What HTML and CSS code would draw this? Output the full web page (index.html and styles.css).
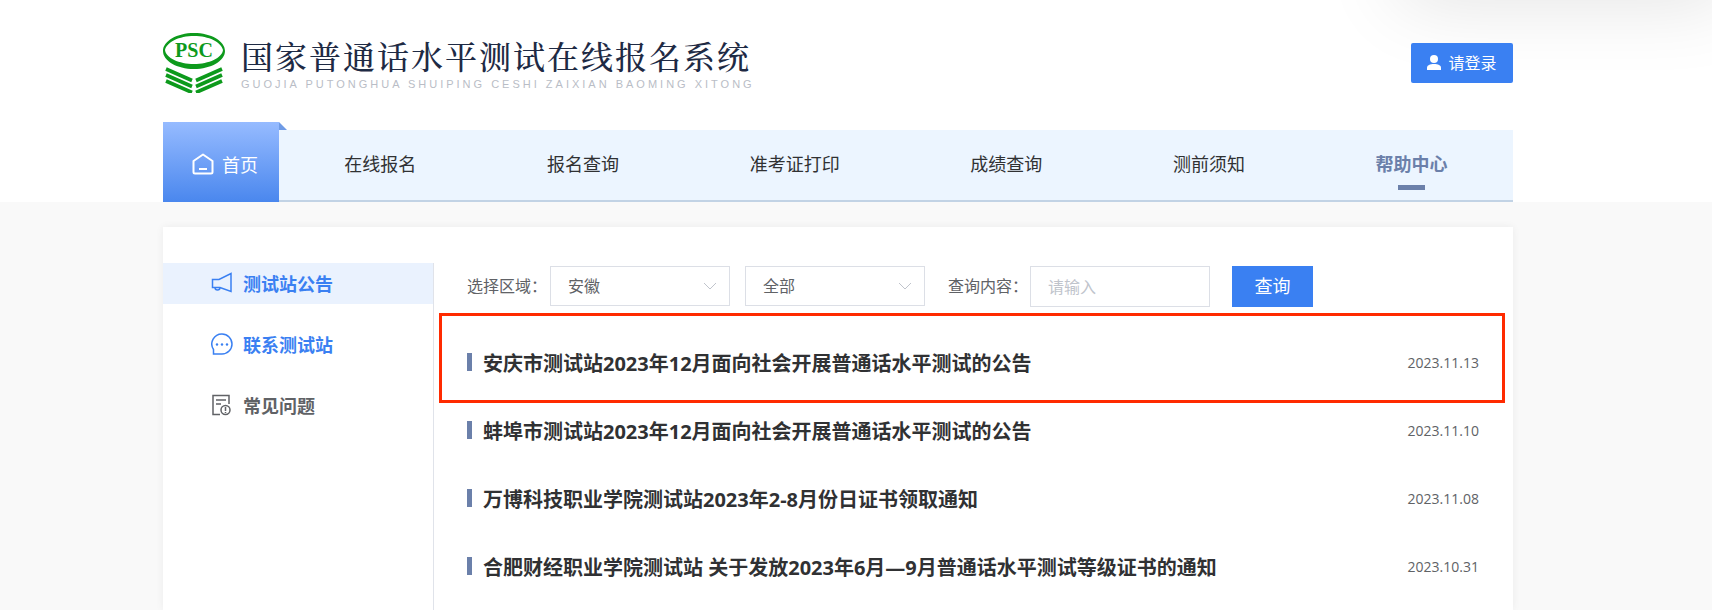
FILE: index.html
```html
<!DOCTYPE html>
<html lang="zh-CN">
<head>
<meta charset="utf-8">
<title>国家普通话水平测试在线报名系统</title>
<link rel="stylesheet" href="styles.css">
</head>
<body>
<header class="header">
  <div class="top-shade"></div>
  <div class="brand-row">
    <a class="brand" href="#">
      <svg class="logo" viewBox="0 0 62 60" aria-hidden="true">
        <path fill="#0d9a1c" fill-rule="evenodd" d="M31 0C48 0 62 8 62 18S48 36 31 36 0 28 0 18 14 0 31 0ZM31 3C16 3 4 9 2 17 3 25 16 31 31 31S59 25 60 17C58 9 46 3 31 3Z"/>
        <text class="logo-text" x="31" y="24" text-anchor="middle">PSC</text>
        <path fill="none" stroke="#0d9a1c" stroke-width="3.600" d="M3 36 29 47.500M3 42 29 53.500M3 48 29 59.500M59 36 33 47.500M59 42 33 53.500M59 48 33 59.500"/>
      </svg>
      <span class="brand-names">
        <span class="brand-cn">国家普通话水平测试在线报名系统</span>
        <span class="brand-en">GUOJIA PUTONGHUA SHUIPING CESHI ZAIXIAN BAOMING XITONG</span>
      </span>
    </a>
    <button class="login" type="button">
      <svg class="user-icon" viewBox="0 0 14 15" aria-hidden="true"><circle cx="7" cy="4" r="4" fill="#fff"/><path fill="#fff" d="M0 15V13C0 10 3 9 7 9S14 10 14 13V15Z"/></svg>
      请登录
    </button>
  </div>
  <nav class="nav">
    <a class="home" href="#">
      <svg class="home-icon" viewBox="0 0 22 22" fill="none" stroke="#fff" stroke-width="2" aria-hidden="true"><path stroke-linejoin="round" d="M1.500 8 11 1.500 20.500 8V19Q20.500 20.500 19 20.500H3Q1.500 20.500 1.500 19Z"/><path d="M7 16H15"/></svg>
      首页
    </a>
    <div class="nav-links">
      <a href="#">在线报名</a>
      <a href="#">报名查询</a>
      <a href="#">准考证打印</a>
      <a href="#">成绩查询</a>
      <a href="#">测前须知</a>
      <a class="current" href="#">帮助中心</a>
    </div>
  </nav>
</header>
<main class="main">
  <div class="card">
    <aside class="side">
      <a class="side-link active" href="#">
        <svg class="side-icon" viewBox="0 0 22 22" fill="none" stroke="currentColor" stroke-width="1.500" aria-hidden="true"><path d="M20 1.500V19.500L9 15.500H1.500V7.500H8Z"/><path d="M4 15.500Q4 18 6.500 18T9 15.500"/></svg>
        测试站公告
      </a>
      <a class="side-link blue" href="#">
        <svg class="side-icon" viewBox="0 0 22 22" fill="none" stroke="currentColor" stroke-width="1.500" aria-hidden="true"><path d="M11 1A10 10 0 1 1 11 21H2.500V16.500A10 10 0 0 1 11 1Z"/><g fill="currentColor" stroke="none"><circle cx="6" cy="11.500" r="1.200"/><circle cx="11" cy="11.500" r="1.200"/><circle cx="16" cy="11.500" r="1.200"/></g></svg>
        联系测试站
      </a>
      <a class="side-link" href="#">
        <svg class="side-icon" viewBox="0 0 22 22" fill="none" stroke="currentColor" stroke-width="1.500" aria-hidden="true"><path d="M9 20.500H2V1.500H18V10M5 6H15M5 10H10"/><circle cx="14.500" cy="16" r="4.500"/><path d="M14.500 13V17M14.500 18V19"/></svg>
        常见问题
      </a>
    </aside>
    <section class="content">
      <form class="filters">
        <label class="field-label" for="area">选择区域：</label>
        <span class="select-box">
          <select id="area"><option>安徽</option></select>
          <svg class="chevron" viewBox="0 0 14 8" aria-hidden="true"><path d="M1 1 7 7 13 1"/></svg>
        </span>
        <span class="select-box">
          <select aria-label="测试站"><option>全部</option></select>
          <svg class="chevron" viewBox="0 0 14 8" aria-hidden="true"><path d="M1 1 7 7 13 1"/></svg>
        </span>
        <label class="field-label second" for="query">查询内容：</label>
        <input id="query" type="text" placeholder="请输入">
        <button class="search" type="button">查询</button>
      </form>
      <ul class="notices">
        <li class="notice marked"><a href="#">安庆市测试站2023年12月面向社会开展普通话水平测试的公告</a><time>2023.11.13</time></li>
        <li class="notice"><a href="#">蚌埠市测试站2023年12月面向社会开展普通话水平测试的公告</a><time>2023.11.10</time></li>
        <li class="notice"><a href="#">万博科技职业学院测试站2023年2-8月份日证书领取通知</a><time>2023.11.08</time></li>
        <li class="notice"><a href="#">合肥财经职业学院测试站 关于发放2023年6月—9月普通话水平测试等级证书的通知</a><time>2023.10.31</time></li>
      </ul>
    </section>
  </div>
</main>
</body>
</html>
```
FILE: styles.css
```css
* { box-sizing: border-box; }

body {
  margin: 0;
  min-height: 100vh;
  display: flex;
  flex-direction: column;
  background: #f9f9f9;
  color: #606266;
  font-family: "Open Sans", "Noto Sans CJK SC", sans-serif;
  font-size: 16px;
}

a { color: inherit; text-decoration: none; }
button, input, select { font: inherit; }

.header {
  position: relative;
  overflow: hidden;
  padding: 32px 199px 0 163px;
  background: #fff;
}

.top-shade {
  position: absolute;
  top: -80px;
  left: 1400px;
  right: -20px;
  height: 80px;
  box-shadow: 0 0 80px rgba(0, 0, 0, 0.12);
}

.brand-row {
  position: relative;
  display: flex;
  justify-content: space-between;
  align-items: center;
  height: 62px;
}

.brand { display: flex; align-items: center; gap: 16px; }
.logo { width: 62px; height: 60px; }
.logo-text {
  fill: #0d9a1c;
  font-family: "Liberation Serif", serif;
  font-size: 20px;
  font-weight: bold;
}
.brand-names { display: flex; flex-direction: column; gap: 4px; }
.brand-cn {
  color: #1e2a44;
  font-family: "Noto Serif CJK SC", "Noto Sans CJK SC", serif;
  font-size: 32px;
  font-weight: 500;
  line-height: 38px;
  letter-spacing: 2px;
}
.brand-en {
  color: #b9bdc6;
  font-family: "Liberation Sans", sans-serif;
  font-size: 11px;
  line-height: 12px;
  letter-spacing: 3px;
}

.login {
  display: flex;
  align-items: center;
  justify-content: center;
  gap: 7px;
  width: 102px;
  height: 40px;
  padding: 0 0 2px;
  border: 0;
  border-radius: 2px;
  background: #3a80f2;
  color: #fff;
}
.user-icon { width: 14px; height: 15px; }

.nav { display: flex; align-items: flex-end; margin-top: 28px; }
.home {
  position: relative;
  display: flex;
  align-items: center;
  justify-content: center;
  gap: 8px;
  width: 116px;
  height: 80px;
  padding: 4px 0 0 8px;
  background: linear-gradient(#96bbff, #4a87ee);
  color: #fff;
  font-size: 18px;
}
.home::after {
  content: "";
  position: absolute;
  top: 0;
  left: 100%;
  border-left: 8px solid #6f9be6;
  border-top: 8px solid transparent;
}
.home-icon { width: 22px; height: 22px; }

.nav-links {
  flex: 1;
  display: flex;
  justify-content: space-around;
  height: 72px;
  border-bottom: 2px solid #c2d3e5;
  background: #ecf5ff;
  color: #303133;
  font-size: 18px;
  line-height: 68px;
}
.current { position: relative; color: #6b80aa; font-weight: bold; }
.current::after {
  content: "";
  position: absolute;
  left: 50%;
  bottom: 10px;
  width: 27px;
  height: 5px;
  margin-left: -14px;
  background: #6b80aa;
}

.main {
  flex: 1;
  display: flex;
  padding: 25px 199px 0 163px;
}
.card {
  flex: 1;
  display: flex;
  padding-top: 36px;
  background: #fff;
  box-shadow: 0 0 8px rgba(0, 0, 0, 0.06);
}

.side {
  width: 271px;
  border-right: 1px solid #e0e3ea;
}
.side-link {
  display: flex;
  align-items: center;
  gap: 10px;
  height: 41px;
  margin-bottom: 20px;
  padding: 0 0 2px 48px;
  font-size: 18px;
  font-weight: bold;
}
.side-icon { width: 22px; height: 22px; }
.active { background: #eaf2fe; color: #3a80f2; }
.blue { color: #3a80f2; }

.content { flex: 1; padding: 3px 34px 0 33px; }

.filters { display: flex; align-items: flex-start; height: 41px; }
.field-label { width: 83px; white-space: nowrap; font-size: 16px; line-height: 40px; }
.second { width: 82px; margin-left: 8px; }
.select-box { position: relative; margin-right: 15px; }
select, input {
  display: block;
  width: 180px;
  height: 40px;
  padding: 0 17px;
  border: 1px solid #dcdfe6;
  border-radius: 0;
  background: #fff;
  color: #606266;
  appearance: none;
}
input { height: 41px; }
input::placeholder { color: #c0c4cc; opacity: 1; }
.chevron {
  position: absolute;
  top: 16px;
  right: 13px;
  width: 14px;
  height: 8px;
  fill: none;
  stroke: #c0c4cc;
}
.search {
  width: 81px;
  height: 41px;
  margin-left: 22px;
  padding: 0 0 3px;
  border: 0;
  background: #3a80f2;
  color: #fff;
  font-size: 18px;
}

.notices { margin: 21px 0 0; padding: 0; list-style: none; }
.notice {
  position: relative;
  display: flex;
  align-items: center;
  height: 68px;
}
.notice::before {
  content: "";
  width: 5px;
  height: 18px;
  margin-right: 11px;
  background: #6b80aa;
}
.notice a {
  flex: 1;
  color: #303133;
  font-size: 20px;
  font-weight: bold;
}
.notice time { font-size: 14px; }
.marked::after {
  content: "";
  position: absolute;
  inset: -15px -26px -7px -28px;
  border: 3px solid #ff2a00;
  pointer-events: none;
}
```
